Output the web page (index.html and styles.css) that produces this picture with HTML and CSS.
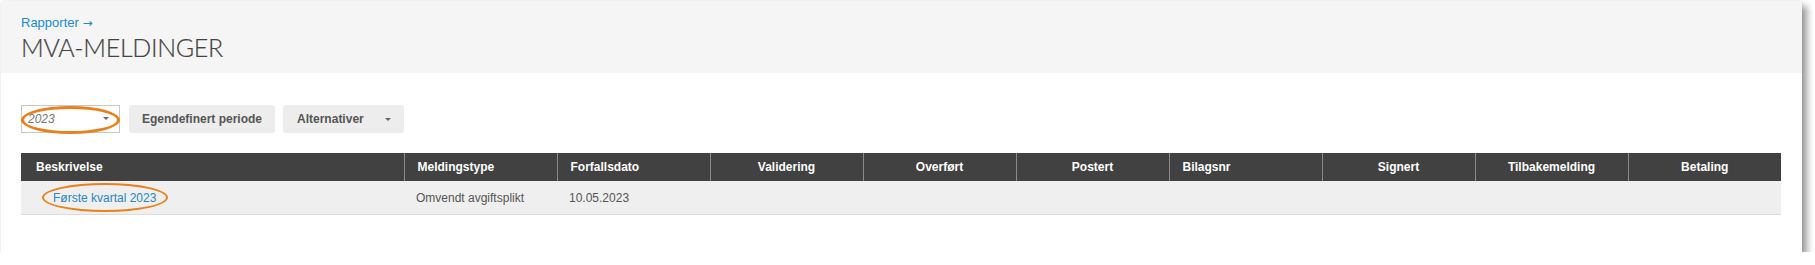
FILE: index.html
```html
<!DOCTYPE html>
<html lang="no">
<head>
    <meta charset="UTF-8">
    <title>MVA-meldinger</title>
    <link rel="stylesheet" href="styles.css">
</head>
<body>
    <div class="panel">
        <div class="page-header">
            <a class="crumb" href="#">Rapporter <span class="arrow">&rarr;</span></a>
            <h1 class="title">MVA-MELDINGER</h1>
        </div>
        <div class="content">
            <!-- periode + knapper -->
            <div class="toolbar">
                <div class="year-select">
                    <span class="year">2023</span>
                    <span class="caret"></span>
                    <span class="mark"></span>
                </div>
                <button class="btn">Egendefinert periode</button>
                <button class="btn btn-dropdown">Alternativer <span class="caret"></span></button>
            </div>
            <table class="reports">
                <colgroup>
                    <col class="col-first">
                    <col><col><col><col><col><col><col><col><col>
                </colgroup>
                <thead>
                    <tr>
                        <th>Beskrivelse</th>
                        <th>Meldingstype</th>
                        <th>Forfallsdato</th>
                        <th class="c">Validering</th>
                        <th class="c">Overført</th>
                        <th class="c">Postert</th>
                        <th>Bilagsnr</th>
                        <th class="c">Signert</th>
                        <th class="c">Tilbakemelding</th>
                        <th class="c">Betaling</th>
                    </tr>
                </thead>
                <tbody>
                    <tr>
                        <td class="name"><a class="report-link" href="#">Første kvartal 2023<span class="mark"></span></a></td>
                        <td>Omvendt avgiftsplikt</td>
                        <td>10.05.2023</td>
                        <td></td>
                        <td></td>
                        <td></td>
                        <td></td>
                        <td></td>
                        <td></td>
                        <td></td>
                    </tr>
                </tbody>
            </table>
        </div>
    </div>
</body>
</html>
```

FILE: styles.css
```css
html,body{
    margin: 0;
    background: #fff;
}
body{
    padding: 1px 0 0 1px;
    font-family: "Liberation Sans", Arial, sans-serif;
    font-size: 12px;
}
.panel{
    width: 1801px;
    height: 251px;
    overflow: hidden;
    background: #fff;
    box-shadow: 0 0 2px rgba(0,0,0,0.1), 5px 5px 7px rgba(0,0,0,0.4);
}
.page-header{
    height: 72px;
    box-sizing: border-box;
    padding: 14px 20px 0 20px;
    background: #f5f5f5;
}
.crumb{
    display: block;
    font-size: 13px;
    line-height: 16px;
    color: #1b8ac6;
    text-decoration: none;
}
.arrow{
    font-family: "DejaVu Sans", sans-serif;
    font-size: 12px;
}
.title{
    margin: 1px 0 0 0;
    font-family: Lato, "Open Sans", sans-serif;
    font-weight: 300;
    font-size: 25px;
    line-height: 30px;
    color: #444;
    letter-spacing: -0.3px;
    -webkit-text-stroke: 0.2px #444;
}
.content{
    padding: 32px 21px 0 20px;
}
.toolbar{
    display: flex;
    height: 28px;
}
.year-select{
    position: relative;
    width: 99px;
    height: 28px;
    box-sizing: border-box;
    border: 1px solid #c8c8c8;
    background: #fff;
    display: flex;
    align-items: center;
    padding: 0 0 0 6px;
    margin-right: 9px;
}
.year{
    font-style: italic;
    font-size: 12px;
    color: #777;
    flex: 1;
}
.caret{
    display: inline-block;
    width: 0;
    height: 0;
    border-left: 3px solid transparent;
    border-right: 3px solid transparent;
    border-top: 3px solid #666;
}
.year-select .caret{
    margin-right: 10px;
    margin-top: -2px;
}
.btn{
    height: 28px;
    margin: 0 8px 0 0;
    padding: 0 13px;
    border: none;
    border-radius: 3px;
    background: #ededed;
    color: #555;
    font-family: "Liberation Sans", Arial, sans-serif;
    font-weight: bold;
    font-size: 12px;
}
.btn-dropdown{
    padding: 0 13px 0 14px;
}
.btn-dropdown .caret{
    margin-left: 18px;
    vertical-align: middle;
}
/* oransje markering */
.mark{
    position: absolute;
    box-sizing: border-box;
    border: 3px solid #e8801c;
    border-radius: 50%;
    pointer-events: none;
}
.year-select .mark{
    left: -1px;
    top: 0;
    width: 99px;
    height: 28px;
}
.reports{
    margin-top: 20px;
    width: 1760px;
    border-collapse: collapse;
    table-layout: fixed;
}
.col-first{
    width: 383px;
}
.reports th{
    height: 28px;
    padding: 0 13px;
    background: #414141;
    color: #fff;
    font-weight: bold;
    font-size: 12px;
    text-align: left;
    border-left: 1px solid #8a8a8a;
}
.reports th:first-child{
    border-left: none;
    padding-left: 15px;
}
.reports th.c{
    text-align: center;
}
.reports td{
    height: 33px;
    padding: 0 12px;
    background: #efefef;
    color: #555;
    font-size: 12px;
    border-bottom: 1px solid #dcdcdc;
}
.reports td.name{
    padding-left: 32px;
}
.report-link{
    position: relative;
    display: inline-block;
    line-height: 14px;
    color: #2a86bf;
    text-decoration: none;
}
.report-link .mark{
    left: -11px;
    right: -12px;
    top: -8px;
    bottom: -7px;
    border-width: 2.5px;
}
```
